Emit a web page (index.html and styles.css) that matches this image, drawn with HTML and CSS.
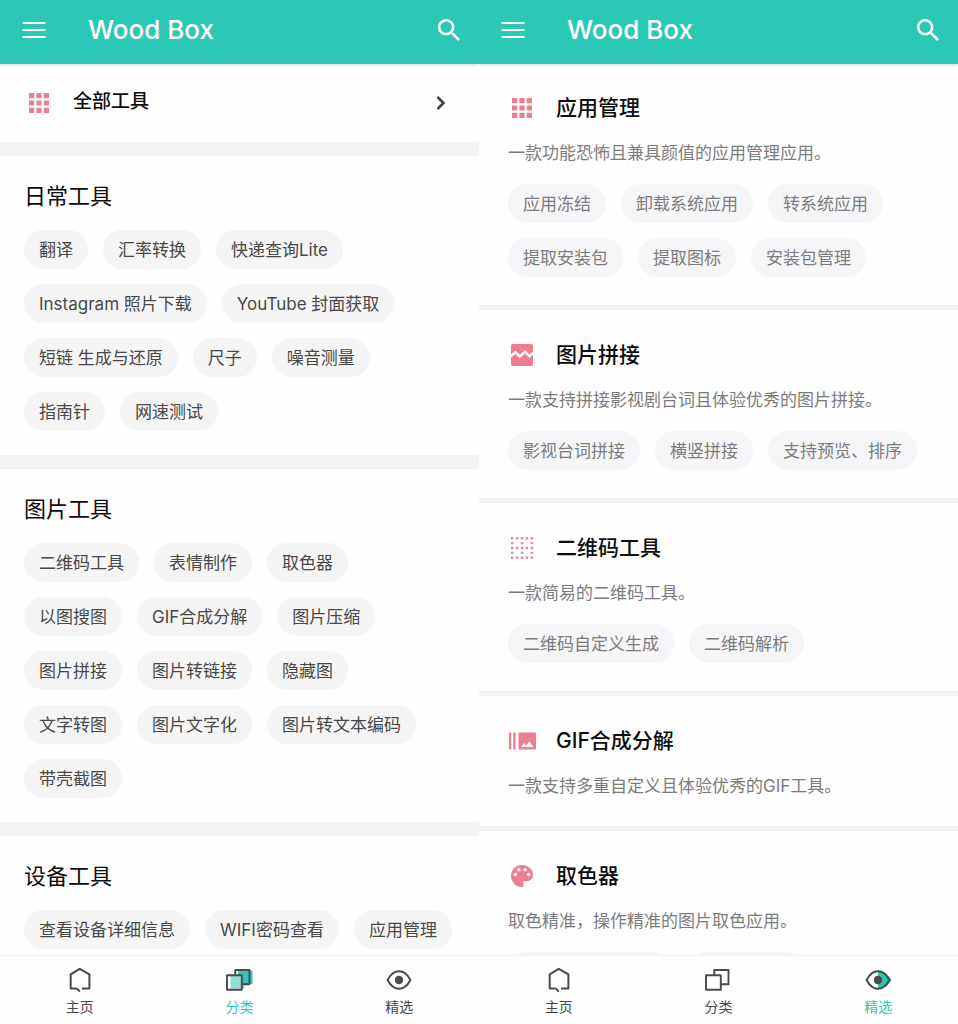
FILE: index.html
```html
<!DOCTYPE html>
<html lang="zh-CN">
<head>
    <meta charset="UTF-8">
    <meta name="viewport" content="width=device-width, initial-scale=1.0">
    <title>Wood Box</title>
    <link rel="stylesheet" href="styles.css">
</head>
<body>

<!-- Shared icons -->
<svg class="sprite" aria-hidden="true">
    <symbol id="icon-menu" viewBox="0 0 24 18">
        <path d="M.5 2h23M.5 9h23M.5 16h23" fill="none" stroke="#fff" stroke-width="2.2"/>
    </symbol>
    <symbol id="icon-search" viewBox="3 3 17.49 17.49">
        <path fill="#fff" d="M15.5 14h-.79l-.28-.27C15.41 12.59 16 11.11 16 9.5 16 5.91 13.09 3 9.5 3S3 5.91 3 9.5 5.91 16 9.5 16c1.61 0 3.09-.59 4.23-1.57l.27.28v.79l5 4.99L20.49 19l-4.99-5zm-6 0C7.01 14 5 11.99 5 9.5S7.01 5 9.5 5 14 7.01 14 9.5 11.99 14 9.5 14z"/>
    </symbol>
    <symbol id="icon-grid" viewBox="0 0 28 28">
        <path fill="#e9808d" d="M4 4h5.2v5.2H4zM11.4 4h5.2v5.2h-5.2zM18.8 4H24v5.2h-5.2zM4 11.4h5.2v5.2H4zM11.4 11.4h5.2v5.2h-5.2zM18.8 11.4H24v5.2h-5.2zM4 18.8h5.2V24H4zM11.4 18.8h5.2V24h-5.2zM18.8 18.8H24V24h-5.2z"/>
    </symbol>
    <symbol id="icon-home" viewBox="0 0 28 28">
        <path d="M10.8 22.4l3 3.200M16 22.600h7.400V8.400L13.700 2.800 4.700 8.400v14h6.100" fill="none" stroke="#4a4a4a" stroke-width="2" stroke-linejoin="round"/>
    </symbol>
    <symbol id="icon-category" viewBox="0 0 28 28">
        <path d="M10.3 9.3V4h14.2v14.2h-7.3M2 9.3h14.8v14.4H2z" fill="none" stroke="#4a4a4a" stroke-width="1.9" stroke-linejoin="round"/>
    </symbol>
    <symbol id="icon-eye" viewBox="0 0 28 28">
        <path d="M2.6 14C5.6 8.3 9.6 5.3 14 5.3S22.4 8.3 25.4 14C22.4 19.7 18.4 22.7 14 22.7S5.6 19.7 2.6 14z" fill="none" stroke="#4a4a4a" stroke-width="2" stroke-linejoin="round"/>
        <circle cx="14" cy="14" r="4.2" fill="#4a4a4a"/>
    </symbol>
</svg>

<div class="screens">

    <div class="screen">
        <header class="app-bar">
            <button class="icon-btn" type="button" aria-label="菜单"><svg width="24" height="18"><use href="#icon-menu"/></svg></button>
            <h1>Wood Box</h1>
            <button class="icon-btn" type="button" aria-label="搜索"><svg width="22" height="22"><use href="#icon-search"/></svg></button>
        </header>

        <main class="content">
            <a class="all-tools" href="#">
                <svg width="28" height="28"><use href="#icon-grid"/></svg>
                <span>全部工具</span>
                <svg class="chevron" width="10" height="14" viewBox="0 0 10 14"><path d="M1.5 1l6 6-6 6" fill="none" stroke="#444" stroke-width="2.6"/></svg>
            </a>

            <section class="group">
                <h2>日常工具</h2>
                <div class="chips">
                    <a class="chip" href="#">翻译</a>
                    <a class="chip" href="#">汇率转换</a>
                    <a class="chip" href="#">快递查询Lite</a>
                    <a class="chip" href="#">Instagram 照片下载</a>
                    <a class="chip" href="#">YouTube 封面获取</a>
                    <a class="chip" href="#">短链 生成与还原</a>
                    <a class="chip" href="#">尺子</a>
                    <a class="chip" href="#">噪音测量</a>
                    <a class="chip" href="#">指南针</a>
                    <a class="chip" href="#">网速测试</a>
                </div>
            </section>

            <section class="group">
                <h2>图片工具</h2>
                <div class="chips">
                    <a class="chip" href="#">二维码工具</a>
                    <a class="chip" href="#">表情制作</a>
                    <a class="chip" href="#">取色器</a>
                </div>
                <div class="chips">
                    <a class="chip" href="#">以图搜图</a>
                    <a class="chip" href="#">GIF合成分解</a>
                    <a class="chip" href="#">图片压缩</a>
                </div>
                <div class="chips">
                    <a class="chip" href="#">图片拼接</a>
                    <a class="chip" href="#">图片转链接</a>
                    <a class="chip" href="#">隐藏图</a>
                </div>
                <div class="chips">
                    <a class="chip" href="#">文字转图</a>
                    <a class="chip" href="#">图片文字化</a>
                    <a class="chip" href="#">图片转文本编码</a>
                    <a class="chip" href="#">带壳截图</a>
                </div>
            </section>

            <section class="group">
                <h2>设备工具</h2>
                <div class="chips">
                    <a class="chip" href="#">查看设备详细信息</a>
                    <a class="chip" href="#">WIFI密码查看</a>
                    <a class="chip" href="#">应用管理</a>
                </div>
            </section>
        </main>

        <nav class="tab-bar">
            <a href="#"><svg width="28" height="28"><use href="#icon-home"/></svg>主页</a>
            <a class="active" href="#">
                <svg width="28" height="28" viewBox="0 0 28 28">
                    <path fill="#8fded6" d="M5.500 9.300h14v13.400h-14z"/>
                    <path fill="#2bc8b8" d="M13 4.500h14.500V18h-9.800V9.300H13z"/>
                    <use href="#icon-category"/>
                </svg>分类
            </a>
            <a href="#"><svg width="28" height="28"><use href="#icon-eye"/></svg>精选</a>
        </nav>
    </div>

    <div class="screen">
        <header class="app-bar">
            <button class="icon-btn" type="button" aria-label="菜单"><svg width="24" height="18"><use href="#icon-menu"/></svg></button>
            <h1>Wood Box</h1>
            <button class="icon-btn" type="button" aria-label="搜索"><svg width="22" height="22"><use href="#icon-search"/></svg></button>
        </header>

        <main class="content">
            <article class="feature">
                <h2><svg width="28" height="28"><use href="#icon-grid"/></svg>应用管理</h2>
                <p>一款功能恐怖且兼具颜值的应用管理应用。</p>
                <div class="chips">
                    <span class="chip">应用冻结</span>
                    <span class="chip">卸载系统应用</span>
                    <span class="chip">转系统应用</span>
                    <span class="chip">提取安装包</span>
                    <span class="chip">提取图标</span>
                    <span class="chip">安装包管理</span>
                </div>
            </article>

            <article class="feature">
                <h2>
                    <svg width="28" height="28" viewBox="0 0 28 28">
                        <rect x="3" y="3" width="22" height="22" rx="2" fill="#ef7d8b"/>
                        <path d="M2.500 15.500l5-4.300 4.300 4.300 5.400-4.800 4.300 4.600 4-3.800" fill="none" stroke="#fff" stroke-width="2.400"/>
                    </svg>图片拼接
                </h2>
                <p>一款支持拼接影视剧台词且体验优秀的图片拼接。</p>
                <div class="chips">
                    <span class="chip">影视台词拼接</span>
                    <span class="chip">横竖拼接</span>
                    <span class="chip">支持预览、排序</span>
                </div>
            </article>

            <article class="feature">
                <h2>
                    <svg width="28" height="28" viewBox="0 0 28 28">
                        <path d="M3 4.200h22.200M3 14h22.200M3 23.800h22.200" fill="none" stroke="#e58c9c" stroke-width="2.400" stroke-dasharray="2.400 2.500"/>
                        <path fill="#e58c9c" d="M3 7.900h2.400v2.400H3zM12.800 7.900h2.400v2.400h-2.400zM22.600 7.900H25v2.400h-2.400zM3 17.700h2.400v2.400H3zM12.800 17.700h2.400v2.400h-2.400zM22.600 17.700H25v2.400h-2.400z"/>
                    </svg>二维码工具
                </h2>
                <p>一款简易的二维码工具。</p>
                <div class="chips">
                    <span class="chip">二维码自定义生成</span>
                    <span class="chip">二维码解析</span>
                </div>
            </article>

            <article class="feature">
                <h2>
                    <svg width="28" height="28" viewBox="0 0 28 28">
                        <path fill="#ee7f8e" d="M1 5.500h2.300v17H1zM5.200 5.500h2.300v17H5.200z"/>
                        <rect x="10.500" y="5.500" width="17.500" height="17" rx="1.200" fill="#ee7f8e"/>
                        <path fill="#fff" d="M13 20l3-4 2.200 2.500 3.100-4.300L25.500 20z"/>
                    </svg>GIF合成分解
                </h2>
                <p>一款支持多重自定义且体验优秀的GIF工具。</p>
            </article>

            <article class="feature">
                <h2>
                    <svg width="28" height="28" viewBox="0 0 28 28">
                        <path fill="#ee7f8e" d="M14 3C7.900 3 3 7.900 3 14s4.900 11 11 11c1 0 1.800-.8 1.800-1.800 0-.5-.2-.9-.5-1.200-.3-.3-.4-.7-.4-1.200 0-1 .8-1.800 1.800-1.800h2.200c3.400 0 6.100-2.700 6.100-6.100C25 7.400 20.100 3 14 3z"/>
                        <g fill="#fff">
                            <circle cx="7.300" cy="12.600" r="1.800"/>
                            <circle cx="10.900" cy="7.700" r="1.800"/>
                            <circle cx="17.100" cy="7.700" r="1.800"/>
                            <circle cx="20.800" cy="12.600" r="1.800"/>
                        </g>
                    </svg>取色器
                </h2>
                <p>取色精准，操作精准的图片取色应用。</p>
                <div class="chips">
                    <span class="chip chip-long"></span>
                    <span class="chip chip-short"></span>
                </div>
            </article>
        </main>

        <nav class="tab-bar">
            <a href="#"><svg width="28" height="28"><use href="#icon-home"/></svg>主页</a>
            <a href="#"><svg width="28" height="28"><use href="#icon-category"/></svg>分类</a>
            <a class="active" href="#">
                <svg width="28" height="28" viewBox="0 0 28 28">
                    <path fill="#2bc8b8" d="M14 5.300c6 0 11 4 13.500 8.700C25 18.500 20 22.700 14 22.700z"/>
                    <use href="#icon-eye"/>
                </svg>精选
            </a>
        </nav>
    </div>

</div>

</body>
</html>
```
FILE: styles.css
```css
* {
    box-sizing: border-box;
}

body {
    margin: 0;
    font-family: Inter, "Noto Sans CJK SC", sans-serif;
    background-color: #fefefe;
    color: #0c0c0c;
}

a {
    color: inherit;
    text-decoration: none;
}

h1, h2, p {
    margin: 0;
}

svg {
    display: block;
    flex: none;
}

.sprite {
    position: absolute;
    width: 0;
    height: 0;
}

.screens {
    display: grid;
    grid-template-columns: 1fr 1fr;
    height: 100vh;
}

.screen {
    display: flex;
    flex-direction: column;
    min-width: 0;
    min-height: 0;
    overflow: hidden;
}

/* Top bar */
.app-bar {
    display: flex;
    align-items: center;
    height: 64px;
    padding: 0 19px 5px 22px;
    background-color: #2bc8b8;
    box-shadow: 0 1px 3px rgba(0, 0, 0, 0.15);
    flex: none;
    z-index: 1;
}

.app-bar h1 {
    flex: 1;
    margin-left: 42px;
    font-size: 26px;
    line-height: 32px;
    font-weight: 500;
    color: #fff;
}

.icon-btn {
    padding: 0;
    border: none;
    background: none;
    cursor: pointer;
}

.content {
    flex: 1;
    min-height: 0;
    overflow: hidden;
}

/* Chips */
.chips {
    display: flex;
    flex-wrap: wrap;
    gap: 15px;
}

.chips + .chips {
    margin-top: 15px;
}

.chip {
    height: 39px;
    padding: 0 15px;
    border-radius: 20px;
    background-color: #f5f5f5;
    color: #484848;
    font-size: 17px;
    line-height: 40px;
    white-space: nowrap;
}

/* Category list */
.all-tools {
    display: flex;
    align-items: center;
    gap: 20px;
    height: 78px;
    padding: 0 33px 0 25px;
    font-size: 19px;
    line-height: 24px;
    font-weight: 500;
}

.all-tools span {
    padding-bottom: 3px;
}

.chevron {
    margin-left: auto;
}

.group {
    padding: 25px 24px 24px;
    border-top: 14px solid #f4f4f4;
}

.group h2 {
    margin-bottom: 19px;
    font-size: 22px;
    line-height: 30px;
    font-weight: 400;
}

/* Featured list */
.feature {
    padding: 30px 29px 28px;
    border-bottom: 5px solid #f4f4f4;
}

.feature:first-child {
    padding-top: 29px;
}

.feature h2 {
    display: flex;
    align-items: center;
    gap: 20px;
    font-size: 21px;
    line-height: 30px;
    font-weight: 500;
}

.feature p {
    margin-top: 18px;
    font-size: 17px;
    line-height: 24px;
    color: #7c7c7c;
}

.feature .chips {
    margin-top: 19px;
}

.feature .chip {
    background-color: #f6f6f8;
    color: #7c7c7c;
}

.chip-long {
    width: 166px;
}

.chip-short {
    width: 115px;
}

/* Bottom tabs */
.tab-bar {
    display: grid;
    grid-template-columns: repeat(3, 1fr);
    height: 69px;
    padding-top: 10px;
    border-top: 1px solid #f3f3f3;
    background-color: #fefefe;
    flex: none;
}

.tab-bar a {
    display: flex;
    flex-direction: column;
    align-items: center;
    gap: 4px;
    font-size: 14px;
    line-height: 18px;
    color: #484848;
}

.tab-bar .active {
    color: #2bc8b8;
}
```
